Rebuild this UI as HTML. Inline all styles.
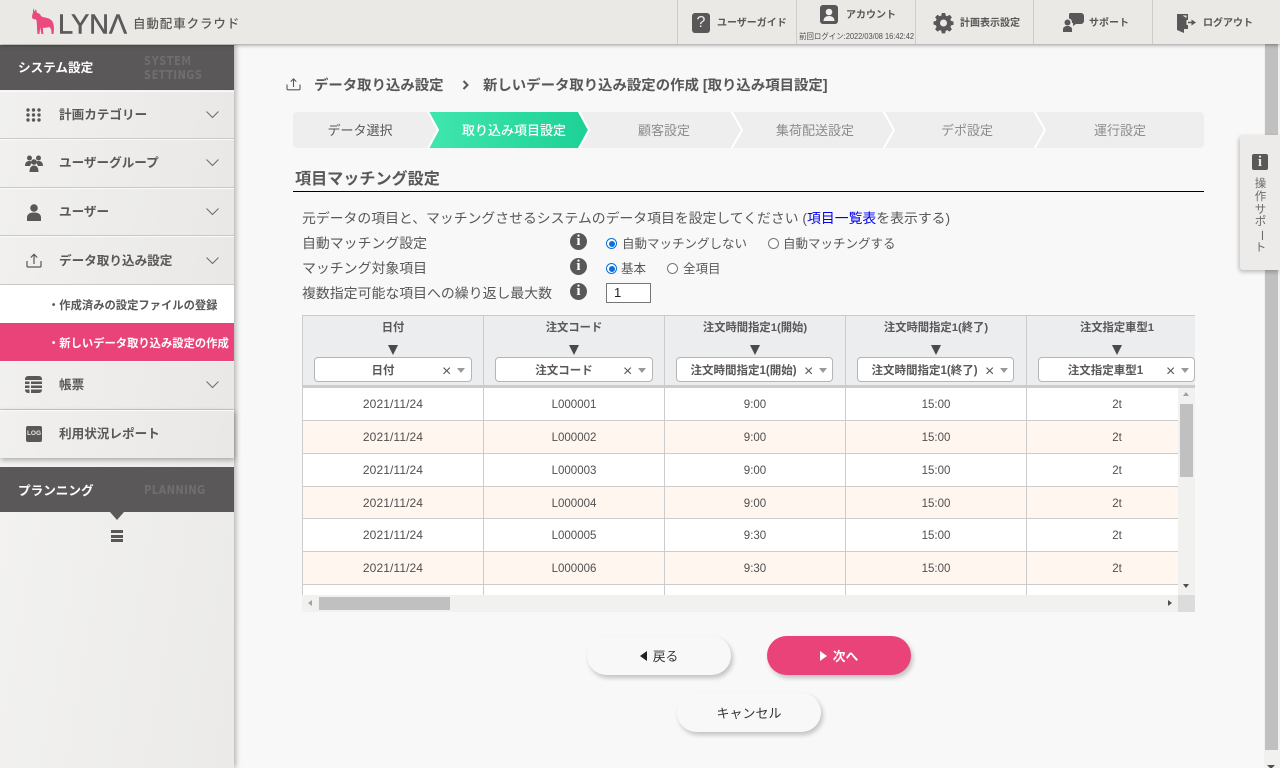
<!DOCTYPE html>
<html lang="ja"><head><meta charset="utf-8"><title>LYNA</title>
<style>
*{box-sizing:border-box;margin:0;padding:0}
html,body{width:1280px;height:768px;overflow:hidden;background:#f8f8f8}
body{position:relative;font-family:"Liberation Sans","Noto Sans CJK JP",sans-serif;color:#595757}
.a{position:absolute;white-space:nowrap}
svg{position:absolute;overflow:visible}
.hd{font-size:10px;font-weight:700;line-height:14px;color:#595757}
.dv{position:absolute;top:0;width:1px;height:44px;background:#cfcdc9}
.mi{position:absolute;left:0;width:234px;background:linear-gradient(100deg,#f1f0ef,#e9e8e6);border-bottom:1px solid #c9c8c6;box-shadow:inset 0 1px 0 #fafafa}
.ml{position:absolute;left:59px;font-size:12.6px;font-weight:700;line-height:18px;white-space:nowrap;color:#595757}
.ch{left:206px;width:13px;height:7px}
.lb{font-size:13.85px;line-height:18px;color:#595757}
.rd{font-size:12.5px;line-height:16px;color:#595757}
.r{position:absolute;width:11px;height:11px;border-radius:50%;border:1px solid #767676;background:#fff}
.r.on{border-color:#0a6fe0}
.r.on:after{content:"";position:absolute;left:1.5px;top:1.5px;width:6px;height:6px;border-radius:50%;background:#0a6fe0}
.inf{position:absolute;left:570px;width:17px;height:17px;border-radius:50%;background:#595757;color:#fff;font:700 15px/17px "Liberation Serif",serif;text-align:center}
.th{position:absolute;top:315px;height:73px;width:181px;background:#ecedef;border-right:1px solid #ccc;border-top:1px solid #ccc;border-bottom:3px solid #ccc}
.th b{position:absolute;left:0;width:180px;top:4px;text-align:center;font-size:11.3px;line-height:16px;color:#595757}
.th i{position:absolute;left:85px;top:29px;width:0;height:0;border-left:5px solid transparent;border-right:5px solid transparent;border-top:10px solid #4a4a4a}
.sel{position:absolute;left:11px;top:41px;width:158px;height:25px;background:#fff;border:1px solid #b5b5b5;border-radius:4px}
.sel span{position:absolute;left:0;width:136px;top:5px;text-align:center;font-size:11.5px;font-weight:700;line-height:16px;color:#595757}
.sel u{position:absolute;left:127px;top:6px;text-decoration:none;font-size:16px;line-height:16px;color:#595757}
.sel s{position:absolute;left:142px;top:10px;width:0;height:0;border-left:4px solid transparent;border-right:4px solid transparent;border-top:5px solid #999}
.row{position:absolute;left:303px;width:875px;height:33px;border-bottom:1px solid #ccc;overflow:hidden}
.row.o{background:#fff6f0}.row.w{background:#fff}
.row div{position:absolute;top:0;width:181px;height:33px;border-right:1px solid #ccc;text-align:center;font-size:11.5px;line-height:35px;color:#4f4f4f}
.row div:first-child{font-size:12px;line-height:33px;letter-spacing:.1px}
.btn{position:absolute;width:144px;height:39px;border-radius:20px;background:#f8f8f8;box-shadow:2px 3px 5px rgba(0,0,0,.22);text-align:center;font-size:12.8px;line-height:42px;color:#333}
.tr{position:absolute;width:0;height:0;border-top:5px solid transparent;border-bottom:5px solid transparent}
.st{position:absolute;top:122px;font-size:13px;line-height:17px;text-align:center;white-space:nowrap}
</style></head><body>

<!-- page scrollbar -->
<div class="a" style="left:1264px;top:0;width:16px;height:768px;background:#f1f1f0"></div>
<div class="a" style="left:1265px;top:44px;width:13px;height:706px;background:#c0c0c0"></div>
<div class="tr" style="left:1267px;top:765px;border:0;border-left:4px solid transparent;border-right:4px solid transparent;border-top:4px solid #505050"></div>

<!-- breadcrumb -->
<svg style="left:286px;top:78px" width="15" height="13" viewBox="0 0 15 13" fill="none" stroke="#595757" stroke-width="1.1"><path d="M1 6.5v4.3a1 1 0 0 0 1 1h11a1 1 0 0 0 1-1V6.5M7.5 9V1M4.7 3.6 7.5.9l2.8 2.7"/></svg>
<div class="a" style="left:314px;top:76px;font-size:14.4px;font-weight:700;line-height:20px;color:#595757">データ取り込み設定</div>
<svg style="left:462px;top:80px" width="7" height="10" viewBox="0 0 7 10" fill="none" stroke="#595757" stroke-width="2"><path d="M1.5 1 5.5 5 1.5 9"/></svg>
<div class="a" style="left:483px;top:76px;font-size:14.4px;font-weight:700;line-height:20px;color:#595757">新しいデータ取り込み設定の作成 [取り込み項目設定]</div>

<!-- steps -->
<svg style="left:293px;top:112px" width="911" height="36" viewBox="0 0 911 36">
<defs><linearGradient id="g" x1="0" x2="1" y1="0" y2="0"><stop offset="0" stop-color="#40e6ad"/><stop offset="1" stop-color="#1dd196"/></linearGradient></defs>
<rect width="911" height="36" rx="4" fill="#eeeeee"/>
<path d="M136 0H285L295 18 285 36H136L146 18Z" fill="url(#g)"/>
<g fill="none" stroke="#fff" stroke-width="2"><path d="M135 -0.5 145 18 135 36.5M286 -0.5 296 18 286 36.5M438.500 -0.5 449 18 438.500 36.500M590.500 -0.500 601 18 590.500 36.500M741.500 -0.500 752 18 741.500 36.500"/></g>
</svg>
<div class="st" style="left:300px;width:120px;color:#595757">データ選択</div>
<div class="st" style="left:444px;width:140px;color:#fff;font-weight:500">取り込み項目設定</div>
<div class="st" style="left:604px;width:120px;color:#8c8c8c">顧客設定</div>
<div class="st" style="left:755px;width:120px;color:#8c8c8c">集荷配送設定</div>
<div class="st" style="left:907px;width:120px;color:#8c8c8c">デポ設定</div>
<div class="st" style="left:1060px;width:120px;color:#8c8c8c">運行設定</div>

<!-- section -->
<div class="a" style="left:295px;top:168px;font-size:16.1px;font-weight:700;line-height:22px;color:#595757">項目マッチング設定</div>
<div class="a" style="left:293px;top:191px;width:911px;height:1px;background:#000"></div>

<div class="a lb" style="left:302px;top:209px">元データの項目と、マッチングさせるシステムのデータ項目を設定してください (<span style="color:#0000ee">項目一覧表</span>を表示する)</div>
<div class="a lb" style="left:302px;top:234px;font-size:13.9px">自動マッチング設定</div>
<div class="a lb" style="left:302px;top:259px;font-size:13.9px">マッチング対象項目</div>
<div class="a lb" style="left:302px;top:284px;font-size:13.9px">複数指定可能な項目への繰り返し最大数</div>
<div class="inf" style="top:233px">i</div><div class="inf" style="top:258px">i</div><div class="inf" style="top:283px">i</div>
<div class="r on" style="left:606px;top:238px"></div><div class="a rd" style="left:622px;top:236px">自動マッチングしない</div>
<div class="r" style="left:768px;top:238px"></div><div class="a rd" style="left:783px;top:236px">自動マッチングする</div>
<div class="r on" style="left:606px;top:263px"></div><div class="a rd" style="left:621px;top:261px">基本</div>
<div class="r" style="left:667px;top:263px"></div><div class="a rd" style="left:683px;top:261px">全項目</div>
<div class="a" style="left:606px;top:283px;width:45px;height:20px;border:1px solid #767676;background:#fff;font-size:13px;line-height:18px;padding-left:7px;color:#222">1</div>

<!-- table -->
<div class="a" style="left:302px;top:315px;width:893px;height:297px;overflow:hidden;border-left:1px solid #ccc">
 <div style="position:absolute;left:-303px;top:-315px;width:1400px;height:700px">
  <div class="th" style="left:303px"><b>日付</b><i></i><div class="sel"><span>日付</span><u>×</u><s></s></div></div>
  <div class="th" style="left:484px"><b>注文コード</b><i></i><div class="sel"><span>注文コード</span><u>×</u><s></s></div></div>
  <div class="th" style="left:665px"><b>注文時間指定1(開始)</b><i></i><div class="sel" style="width:157px"><span style="width:133px">注文時間指定1(開始)</span><u>×</u><s></s></div></div>
  <div class="th" style="left:846px"><b>注文時間指定1(終了)</b><i></i><div class="sel" style="width:157px"><span style="width:133px">注文時間指定1(終了)</span><u>×</u><s></s></div></div>
  <div class="th" style="left:1027px;border-right:0"><b>注文指定車型1</b><i></i><div class="sel" style="width:157px"><span style="width:133px">注文指定車型1</span><u>×</u><s></s></div></div>

  <div class="row w" style="top:388px"><div style="left:0">2021/11/24</div><div style="left:181px">L000001</div><div style="left:362px">9:00</div><div style="left:543px">15:00</div><div style="left:724px">2t</div></div>
  <div class="row o" style="top:421px"><div style="left:0">2021/11/24</div><div style="left:181px">L000002</div><div style="left:362px">9:00</div><div style="left:543px">15:00</div><div style="left:724px">2t</div></div>
  <div class="row w" style="top:454px"><div style="left:0">2021/11/24</div><div style="left:181px">L000003</div><div style="left:362px">9:00</div><div style="left:543px">15:00</div><div style="left:724px">2t</div></div>
  <div class="row o" style="top:487px;height:32px"><div style="left:0">2021/11/24</div><div style="left:181px">L000004</div><div style="left:362px">9:00</div><div style="left:543px">15:00</div><div style="left:724px">2t</div></div>
  <div class="row w" style="top:519px"><div style="left:0">2021/11/24</div><div style="left:181px">L000005</div><div style="left:362px">9:30</div><div style="left:543px">15:00</div><div style="left:724px">2t</div></div>
  <div class="row o" style="top:552px"><div style="left:0">2021/11/24</div><div style="left:181px">L000006</div><div style="left:362px">9:30</div><div style="left:543px">15:00</div><div style="left:724px">2t</div></div>
  <div class="row w" style="top:585px;border:0"><div style="left:0"></div><div style="left:181px"></div><div style="left:362px"></div><div style="left:543px"></div><div style="left:724px"></div></div>
 </div>
</div>
<!-- table scrollbars -->
<div class="a" style="left:1178px;top:388px;width:17px;height:207px;background:#f1f1f0"></div>
<div class="a" style="left:1180px;top:404px;width:13px;height:73px;background:#c0c0c0"></div>
<div class="a" style="left:1183px;top:392px;width:0;height:0;border-left:3.500px solid transparent;border-right:3.500px solid transparent;border-bottom:4px solid #a3a3a3"></div>
<div class="a" style="left:1183px;top:584px;width:0;height:0;border-left:3.500px solid transparent;border-right:3.500px solid transparent;border-top:4px solid #505050"></div>
<div class="a" style="left:302px;top:595px;width:876px;height:17px;background:#f1f1f0"></div>
<div class="a" style="left:319px;top:597px;width:131px;height:13px;background:#c0c0c0"></div>
<div class="a" style="left:308px;top:600px;width:0;height:0;border-top:3.500px solid transparent;border-bottom:3.500px solid transparent;border-right:4px solid #a3a3a3"></div>
<div class="a" style="left:1168px;top:600px;width:0;height:0;border-top:3.500px solid transparent;border-bottom:3.500px solid transparent;border-left:4px solid #505050"></div>
<div class="a" style="left:1178px;top:595px;width:17px;height:17px;background:#dcdcdc"></div>

<!-- buttons -->
<div class="btn" style="left:587px;top:636px"><span style="display:inline-block;width:0;height:0;border-top:5px solid transparent;border-bottom:5px solid transparent;border-right:7px solid #222;margin-right:6px"></span>戻る</div>
<div class="btn" style="left:767px;top:636px;background:#e9437a;color:#fff;font-weight:700"><span style="display:inline-block;width:0;height:0;border-top:5px solid transparent;border-bottom:5px solid transparent;border-left:7px solid #fff;margin-right:6px"></span>次へ</div>
<div class="btn" style="left:677px;top:693px;font-size:13px">キャンセル</div>

<!-- help tab -->
<div class="a" style="left:1240px;top:135px;width:40px;height:135px;background:#ecebe9;box-shadow:-1px 2px 4px rgba(0,0,0,.25);border-radius:3px 0 0 3px"></div>
<div class="a" style="left:1252px;top:154px;width:16px;height:16px;border-radius:2px;background:#595757;color:#e8e8e8;font:700 15px/16px 'Liberation Serif',serif;text-align:center">i</div>
<div class="a" style="left:1254px;top:178px;width:13px;font-size:11.500px;line-height:12.800px;color:#6b6b6b;white-space:normal;word-break:break-all;text-align:center">操<br>作<br>サ<br>ポ<br><span style="display:inline-block;transform:rotate(90deg)">ー</span><br>ト</div>

<!-- sidebar -->
<div class="a" style="left:0;top:44px;width:234px;height:724px;background:linear-gradient(100deg,#f4f4f3,#ebeae8);box-shadow:2px 0 5px rgba(0,0,0,.28)"></div>
<div class="a" style="left:0;top:45px;width:234px;height:45px;background:#5a5859"></div>
<div class="a" style="left:18px;top:59px;font-size:12.6px;font-weight:700;line-height:18px;color:#fff">システム設定</div>
<div class="a" style="left:144px;top:55px;font-size:12px;font-weight:700;line-height:13.500px;color:#6f6d6e;letter-spacing:.6px;font-family:'DejaVu Sans',sans-serif;transform:scaleX(.82);transform-origin:0 0">SYSTEM<br>SETTINGS</div>

<div class="mi" style="top:91px;height:48px"></div>
<div class="mi" style="top:139px;height:49px"></div>
<div class="mi" style="top:188px;height:48px"></div>
<div class="mi" style="top:236px;height:49px"></div>
<div class="a" style="left:0;top:285px;width:234px;height:38px;background:#fff"></div>
<div class="a" style="left:0;top:323px;width:234px;height:38px;background:#e9437a"></div>
<div class="mi" style="top:361px;height:49px"></div>
<div class="mi" style="top:410px;height:48px;border:0;box-shadow:inset 0 1px 0 #fafafa,1px 2px 5px rgba(0,0,0,.3)"></div>

<!-- icons -->
<svg style="left:26px;top:108px" width="15" height="14" viewBox="0 0 15 14" fill="#595757"><g id="d"><circle cx="2" cy="2" r="1.700"/><circle cx="7.500" cy="2" r="1.700"/><circle cx="13" cy="2" r="1.700"/></g><circle cx="2" cy="7" r="1.700"/><circle cx="7.500" cy="7" r="1.700"/><circle cx="13" cy="7" r="1.700"/><circle cx="2" cy="12" r="1.700"/><circle cx="7.500" cy="12" r="1.700"/><circle cx="13" cy="12" r="1.700"/></svg>
<svg style="left:25px;top:155px" width="18" height="17" viewBox="0 0 18 17" fill="#595757"><circle cx="4.500" cy="3" r="2.500"/><circle cx="13.500" cy="3" r="2.500"/><path d="M0 11c0-3 1.500-5 4-5s3 1 3 1l-2 4H0zM18 11c0-3-1.500-5-4-5s-3 1-3 1l2 4h5z"/><circle cx="9" cy="7" r="2.800"/><path d="M4.500 17c0-4 1.500-6.500 4.500-6.500s4.500 2.500 4.500 6.500z"/></svg>
<svg style="left:27px;top:204px" width="14" height="17" viewBox="0 0 14 17" fill="#595757"><circle cx="7" cy="4" r="3.800"/><path d="M0 17v-3.500C0 10 3 8.500 7 8.500s7 1.500 7 5V17z"/></svg>
<svg style="left:26px;top:253px" width="16" height="15" viewBox="0 0 16 15" fill="none" stroke="#595757" stroke-width="1.200"><path d="M1 8v5a1 1 0 0 0 1 1h12a1 1 0 0 0 1-1V8M8 11V1.500M4.800 4.500 8 1.300l3.200 3.200"/></svg>
<svg style="left:25px;top:376px" width="17" height="17" viewBox="0 0 17 17" fill="#595757"><path d="M3 0h11a3 3 0 0 1 3 3v1H0V3a3 3 0 0 1 3-3zM0 5.500h4.500V8H0zM6 5.500h11V8H6zM0 9.500h4.500V12H0zM6 9.500h11V12H6zM0 13.500h4.500V17H3a3 3 0 0 1-3-3zM6 13.500h11v.5a3 3 0 0 1-3 3H6z"/></svg>
<div class="a" style="left:26px;top:426px;width:16px;height:16px;border-radius:2px;background:#595757;color:#e8e8e8;font:700 6.500px/16px 'Liberation Sans',sans-serif;text-align:center">LOG</div>

<div class="ml" style="top:106px">計画カテゴリー</div>
<div class="ml" style="top:154px">ユーザーグループ</div>
<div class="ml" style="top:203px">ユーザー</div>
<div class="ml" style="top:252px">データ取り込み設定</div>
<div class="ml" style="top:376px">帳票</div>
<div class="ml" style="top:425px">利用状況レポート</div>
<div class="a" style="left:48px;top:298px;font-size:11.3px;font-weight:700;line-height:16px;color:#595757">・作成済みの設定ファイルの登録</div>
<div class="a" style="left:48px;top:336px;font-size:11.3px;font-weight:700;line-height:16px;color:#fff">・新しいデータ取り込み設定の作成</div>

<svg class="ch" style="top:111px" viewBox="0 0 13 7" fill="none" stroke="#6a6a6a"><path d="M.5.5 6.500 6.500 12.500.5"/></svg>
<svg class="ch" style="top:159px" viewBox="0 0 13 7" fill="none" stroke="#6a6a6a"><path d="M.5.5 6.500 6.500 12.500.5"/></svg>
<svg class="ch" style="top:208px" viewBox="0 0 13 7" fill="none" stroke="#6a6a6a"><path d="M.5.5 6.500 6.500 12.500.5"/></svg>
<svg class="ch" style="top:257px" viewBox="0 0 13 7" fill="none" stroke="#6a6a6a"><path d="M.5.5 6.500 6.500 12.500.5"/></svg>
<svg class="ch" style="top:381px" viewBox="0 0 13 7" fill="none" stroke="#6a6a6a"><path d="M.5.5 6.500 6.500 12.500.5"/></svg>

<div class="a" style="left:0;top:467px;width:234px;height:45px;background:#5a5859"></div>
<div class="a" style="left:18px;top:482px;font-size:12.600px;font-weight:700;line-height:18px;color:#fff">プランニング</div>
<div class="a" style="left:144px;top:483px;font-size:12px;font-weight:700;line-height:14px;color:#6f6d6e;letter-spacing:.4px;font-family:'DejaVu Sans',sans-serif;transform:scaleX(.84);transform-origin:0 0">PLANNING</div>
<div class="a" style="left:110px;top:512px;width:0;height:0;border-left:7px solid transparent;border-right:7px solid transparent;border-top:8px solid #5a5859"></div>
<div class="a" style="left:111px;top:530px;width:12px;height:3px;background:#595757"></div>
<div class="a" style="left:111px;top:535px;width:12px;height:2.500px;background:#595757"></div>
<div class="a" style="left:111px;top:539px;width:12px;height:3px;background:#595757"></div>

<!-- header -->
<div class="a" style="left:0;top:0;width:1280px;height:44px;background:#ebe9e5;box-shadow:0 1px 4px rgba(0,0,0,.4)"></div>
<svg style="left:31px;top:7px" width="24" height="27" viewBox="0 0 24 27" fill="#ea4a80"><path d="M2 1 3.500 4.500 5 2 6 6C6.500 6 9 6 10 9 12 11 17 10 20 13 23 15 23.500 21 22.500 27H20.500C20.500 23 20 21 18 20 15 21 13 21 12 20.500 12 23 12 25 12.500 27H10.500C10 25 9.500 23 9.500 20 9 23 8.500 25 8.500 27H6.500C6 22 6 17 5.500 13.500 5 11.500 3 13 1.500 11.500.5 10 1.500 7 2 5.500Z"/></svg>
<svg style="left:57px;top:10px" width="72" height="26" viewBox="0 0 72 26"><text x="1" y="23.500" font-family="Liberation Sans" font-size="28" textLength="69" lengthAdjust="spacingAndGlyphs" fill="#5b5a5a" stroke="#5b5a5a" stroke-width=".5">LYNΛ</text></svg>
<div class="a" style="left:133px;top:15px;font-size:12.500px;font-weight:500;letter-spacing:.9px;line-height:18px;color:#595757">自動配車クラウド</div>

<div class="dv" style="left:677px"></div><div class="dv" style="left:796px"></div><div class="dv" style="left:915px"></div><div class="dv" style="left:1033px"></div><div class="dv" style="left:1152px"></div>

<div class="a" style="left:692px;top:13px;width:18px;height:20px;border-radius:3px;background:#595757;color:#eee;font-size:16px;line-height:20px;text-align:center">?</div>
<div class="a hd" style="left:717px;top:17px">ユーザーガイド</div>

<svg style="left:820px;top:5px" width="18" height="19" viewBox="0 0 18 19"><rect width="18" height="19" rx="3" fill="#595757"/><circle cx="9" cy="7" r="3.300" fill="#f0f0f0"/><path d="M3.500 16c0-3 2-5 5.500-5s5.500 2 5.500 5z" fill="#f0f0f0"/></svg>
<div class="a hd" style="left:846px;top:9px">アカウント</div>
<div class="a" style="left:799px;top:31px;font-size:8px;line-height:12px;color:#4f4f4f;transform:scaleX(.93);transform-origin:0 0">前回ログイン:2022/03/08 16:42:42</div>

<svg style="left:934px;top:13px" width="19" height="20" viewBox="0 0 19 20" fill="#595757"><path fill-rule="evenodd" d="M7.800 0h3.400l.5 2.600 1.600.7 2.200-1.500 2.400 2.400-1.500 2.200.7 1.600 2.400.5v3.400l-2.400.5-.7 1.600 1.500 2.200-2.400 2.400-2.200-1.500-1.600.7-.5 2.600H7.800l-.5-2.600-1.600-.7-2.200 1.500-2.400-2.400 1.500-2.200-.7-1.600L-.5 11.500V8.500l2.400-.5.700-1.600-1.500-2.200 2.400-2.400 2.200 1.500 1.600-.7zM9.500 6.500a3.500 3.500 0 1 0 0 7 3.500 3.500 0 0 0 0-7z"/></svg>
<div class="a hd" style="left:960px;top:17px">計画表示設定</div>

<svg style="left:1063px;top:13px" width="21" height="19" viewBox="0 0 21 19" fill="#595757"><path d="M7 0h11a3 3 0 0 1 3 3v5a3 3 0 0 1-3 3h-5l-3 2v-3H9C9 7 8 6 6 5.500V1a2 2 0 0 1 1-1z"/><circle cx="4.500" cy="9.500" r="3"/><path d="M0 19v-2.500C0 14 2 13 4.500 13S9 14 9 16.500V19z"/></svg>
<div class="a hd" style="left:1089px;top:17px">サポート</div>

<svg style="left:1177px;top:13px" width="19" height="20" viewBox="0 0 19 20" fill="#595757"><path d="M0 1h11v6H9.500V2.500H5.500L9.500 5v9.500h-0V12H11v4H7v4l-7-3z"/><path d="M11 8.700h3.500V6.500L19 9.500l-4.500 3v-2.200H11z"/></svg>
<div class="a hd" style="left:1203px;top:17px">ログアウト</div>

</body></html>
